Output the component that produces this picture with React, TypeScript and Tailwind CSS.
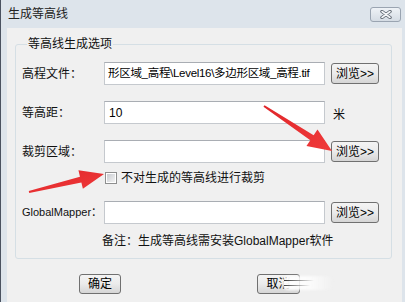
import React from 'react';

const font = { fontFamily: '"Liberation Sans", "Noto Sans CJK SC", sans-serif' };

// tapered red annotation arrow
const arrowPoints = (x1: number, y1: number, x2: number, y2: number, w0: number, w1: number, hw: number, hl: number) => {
  const dx = x2 - x1;
  const dy = y2 - y1;
  const len = Math.hypot(dx, dy);
  const ux = dx / len;
  const uy = dy / len;
  const px = -uy;
  const py = ux;
  const bx = x2 - ux * hl;
  const by = y2 - uy * hl;
  const pts = [
    [x1 + (px * w0) / 2, y1 + (py * w0) / 2],
    [bx + (px * w1) / 2, by + (py * w1) / 2],
    [bx + px * hw, by + py * hw],
    [x2, y2],
    [bx - px * hw, by - py * hw],
    [bx - (px * w1) / 2, by - (py * w1) / 2],
    [x1 - (px * w0) / 2, y1 - (py * w0) / 2],
  ];
  return pts.map((p) => p.join(',')).join(' ');
};

const Browse = () => (
  <button className="ml-[6px] h-[21px] w-[48px] rounded-[3px] border border-[#707070] bg-gradient-to-b from-[#f4f4f4] via-[#ebebeb] to-[#d5d5d5] text-[12px] leading-none text-black">
    浏览&gt;&gt;
  </button>
);

const Field = ({ value, tight }: { value?: string; tight?: boolean }) => (
  <div
    className={
      tight
        ? 'flex h-[23px] w-[221px] items-center overflow-hidden whitespace-nowrap border border-[#c5c9ce] border-t-[#a9adb3] bg-white pl-[3px] text-[11.5px] tracking-[-0.3px] text-black'
        : 'flex h-[23px] w-[221px] items-center overflow-hidden whitespace-nowrap border border-[#c5c9ce] border-t-[#a9adb3] bg-white pl-[4px] text-[12px] text-black'
    }
  >
    {value}
  </div>
);

export default function App() {
  return (
    <div className="relative flex h-[302px] w-[405px] flex-col overflow-hidden border-l border-[#4a5260] bg-[#dde4eb]" style={font}>
      <div className="flex h-[28px] items-start justify-between pl-[7px] pr-[4px]">
        <span className="mt-[5px] text-[12px] text-[#222]">生成等高线</span>
        <div className="mt-[7px] flex h-[15px] w-[31px] items-center justify-center rounded-[3px] border border-[#9aa4b1] bg-gradient-to-b from-[#eef2f6] to-[#d5dce4]">
          <svg width="12" height="9" viewBox="0 0 12 9">
            <path d="M2 1.5 L10 7.5 M10 1.5 L2 7.5" stroke="#5d6670" strokeWidth="3.4" strokeLinecap="round" />
            <path d="M2 1.5 L10 7.5 M10 1.5 L2 7.5" stroke="#f4f6f8" strokeWidth="1.6" strokeLinecap="round" />
          </svg>
        </div>
      </div>

      <div className="ml-[6px] mr-[3px] flex-1 bg-[#f0f0f0]">
        <fieldset className="mx-[8px] mr-[10px] mt-[8px] rounded-[3px] border border-[#d5dfe5] pb-[9px] pl-[6px]">
          <legend className="ml-[5px] px-[1px] text-[12px] leading-[16px] text-[#111]">等高线生成选项</legend>

          <div className="mt-[10px] flex h-[23px] items-center">
            <span className="w-[82px] text-[12px] text-[#111]">高程文件：</span>
            <Field tight value="形区域_高程\Level16\多边形区域_高程.tif" />
            <Browse />
          </div>

          <div className="mt-[16px] flex h-[23px] items-center">
            <span className="w-[82px] text-[12px] text-[#111]">等高距：</span>
            <Field value="10" />
            <span className="ml-[8px] mt-[4px] text-[12px] text-[#111]">米</span>
          </div>

          <div className="mt-[16px] flex h-[23px] items-center">
            <span className="w-[82px] text-[12px] text-[#111]">裁剪区域：</span>
            <Field />
            <Browse />
          </div>

          <div className="mt-[7px] flex h-[16px] items-center pl-[83px]">
            <span className="flex h-[12px] w-[12px] items-center justify-center border border-[#8e8f8f] bg-white">
              <span className="h-[8px] w-[8px] bg-gradient-to-br from-[#c9ccd1] to-[#f3f3f3]" />
            </span>
            <span className="ml-[4px] text-[12px] text-[#111]">不对生成的等高线进行裁剪</span>
          </div>

          <div className="mt-[15px] flex h-[23px] items-center">
            <span className="w-[82px] text-[11px] text-[#111]">GlobalMapper：</span>
            <Field />
            <Browse />
          </div>

          <div className="mt-[9px] h-[16px] pl-[80px] text-[12px] leading-[16px] text-[#111]">
            备注：生成等高线需安装GlobalMapper软件
          </div>
        </fieldset>

        <div className="mt-[15px] flex">
          <button className="ml-[72px] h-[20px] w-[42px] rounded-[3px] border border-[#707070] bg-gradient-to-b from-[#f4f4f4] via-[#ebebeb] to-[#d5d5d5] text-[12px] leading-none text-black">
            确定
          </button>
          <button className="ml-[136px] h-[20px] w-[43px] rounded-[3px] border border-[#707070] bg-gradient-to-b from-[#f4f4f4] via-[#ebebeb] to-[#d5d5d5] text-[12px] leading-none text-black">
            取消
          </button>
        </div>
      </div>

      {/* watermark smear over the cancel button */}
      <div className="pointer-events-none absolute left-[281px] top-[276px] h-[14px] w-[52px] rounded-full bg-gradient-to-r from-white via-white/80 to-white/0 blur-[1px]" />
      <div className="pointer-events-none absolute left-[283px] top-[280px] h-px w-[30px] bg-gradient-to-r from-[#333] to-transparent" />
      <div className="pointer-events-none absolute left-[283px] top-[285px] h-px w-[26px] bg-gradient-to-r from-[#444] to-transparent" />

      <svg className="pointer-events-none absolute left-0 top-0" width="405" height="302">
        <defs>
          <linearGradient id="red" x1="0" y1="0" x2="1" y2="1">
            <stop offset="0" stopColor="#e0262a" />
            <stop offset="1" stopColor="#f03a3a" />
          </linearGradient>
        </defs>
        <polygon points={arrowPoints(263, 106, 331, 151, 2, 6, 10, 24)} fill="url(#red)" />
        <polygon points={arrowPoints(28, 192, 103, 174, 2, 6, 9.5, 24)} fill="url(#red)" />
      </svg>
    </div>
  );
}
